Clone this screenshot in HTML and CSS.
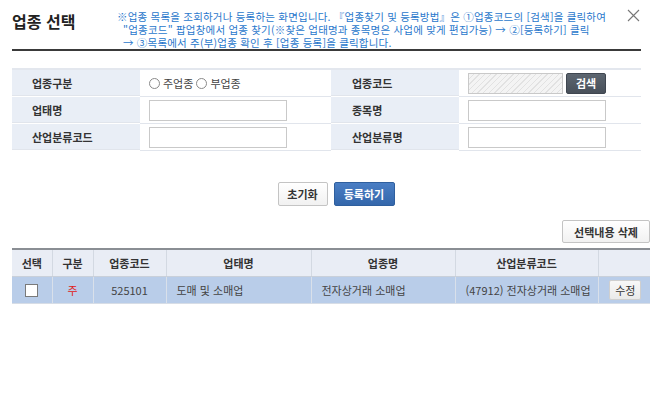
FILE: index.html
```html
<!DOCTYPE html>
<html lang="ko">
    <head>
        <meta charset="UTF-8" />
        <meta name="viewport" content="width=device-width, initial-scale=1.0" />
        <title>업종 선택</title>
        <link rel="stylesheet" href="styles.css">
    </head>
    <body>
        <div id="popup">
            <div class="popHead">
                <h1 class="popTitle">업종 선택</h1>
                <div class="popDesc">
                    <p>※업종 목록을 조회하거나 등록하는 화면입니다. 『업종찾기 및 등록방법』은 ①업종코드의 [검색]을 클릭하여<br>"업종코드" 팝업창에서 업종 찾기(※찾은 업태명과 종목명은 사업에 맞게 편집가능) → ②[등록하기] 클릭<br>→ ③목록에서 주(부)업종 확인 후 [업종 등록]을 클릭합니다.</p>
                </div>
                <button class="btnClose" title="닫기">
                    <svg width="13" height="13" viewBox="0 0 13 13"><path d="M1 1 L12 12 M12 1 L1 12" stroke="#777" stroke-width="1.1" fill="none"/></svg>
                </button>
            </div>

            <div class="searchForm">
                <div class="lbl">업종구분</div>
                <div class="val radios">
                    <label><input type="radio" name="gubun"> 주업종</label>
                    <label><input type="radio" name="gubun"> 부업종</label>
                </div>
                <div class="lbl">업종코드</div>
                <div class="val">
                    <input type="text" class="txt readonly short" readonly>
                    <button class="btnSearch">검색</button>
                </div>

                <div class="lbl">업태명</div>
                <div class="val"><input type="text" class="txt"></div>
                <div class="lbl">종목명</div>
                <div class="val"><input type="text" class="txt"></div>

                <div class="lbl">산업분류코드</div>
                <div class="val"><input type="text" class="txt"></div>
                <div class="lbl">산업분류명</div>
                <div class="val"><input type="text" class="txt"></div>
            </div>

            <div class="btnArea">
                <button class="btn btnGray">초기화</button>
                <button class="btn btnBlue">등록하기</button>
            </div>

            <div class="listTop">
                <button class="btn btnGray">선택내용 삭제</button>
            </div>

            <table class="listTbl">
                <colgroup>
                    <col style="width:40px"><col style="width:41px"><col style="width:73px"><col style="width:145px"><col style="width:144px"><col style="width:143px"><col>
                </colgroup>
                <thead>
                    <tr><th>선택</th><th>구분</th><th>업종코드</th><th>업태명</th><th>업종명</th><th>산업분류코드</th><th></th></tr>
                </thead>
                <tbody>
                    <tr class="on">
                        <td class="c"><input type="checkbox" class="chk"></td>
                        <td class="c main">주</td>
                        <td class="c">525101</td>
                        <td>도매 및 소매업</td>
                        <td>전자상거래 소매업</td>
                        <td>(47912) 전자상거래 소매업</td>
                        <td class="c"><button class="btnEdit">수정</button></td>
                    </tr>
                </tbody>
            </table>
        </div>
    </body>
</html>
```

FILE: styles.css
```css
body {
  margin: 0;
  background: #fff;
  color: #333;
  font-family: "Noto Sans CJK KR", "Noto Sans", sans-serif;
  font-size: 11px;
}

#popup {
  width: 655px;
  height: 394px;
  box-sizing: border-box;
  padding: 0 5px 0 12px;
}

/* header */
.popHead {
  display: flex;
  align-items: flex-start;
  height: 49px;
  margin-right: 9px;
  border-bottom: 2px solid #3a3a3a;
  position: relative;
}

.popTitle {
  margin: 11px 0 0 0;
  font-size: 16px;
  line-height: 20px;
  font-weight: bold;
  color: #222;
  width: 105px;
  flex: none;
}

.popDesc p {
  margin: 10px 0 0 0;
  padding-left: 6px;
  text-indent: -6px;
  color: #2a78cc;
  font-size: 10.5px;
  line-height: 13px;
  letter-spacing: 0.2px;
  white-space: nowrap;
}

.btnClose {
  position: absolute;
  right: 1px;
  top: 9px;
  border: 0;
  background: none;
  padding: 0;
  width: 13px;
  height: 13px;
  cursor: pointer;
}

/* search form */
.searchForm {
  display: grid;
  grid-template-columns: 128px 191px 128px 182px;
  margin-top: 17px;
  margin-right: 9px;
  border-top: 2px solid #e3e7ee;
}

.searchForm .lbl,
.searchForm .val {
  height: 26px;
  border-bottom: 1px solid #e1e5ec;
  display: flex;
  align-items: center;
}

.searchForm .lbl {
  background: #e9eef6;
  padding-left: 20px;
  font-weight: bold;
  font-size: 11px;
  color: #333;
  box-sizing: border-box;
}

.searchForm .val {
  padding-left: 9px;
  gap: 3px;
}

.searchForm .lbl:nth-child(4n+3) {
  padding-left: 21px;
}

.txt {
  box-sizing: border-box;
  width: 138px;
  height: 21px;
  border: 1px solid #c9c9c9;
  background: #fff;
  padding: 0 4px;
  margin: 0;
}

.txt.readonly {
  width: 95px;
  background: repeating-linear-gradient(135deg, #f4f4f4 0 3px, #e2e2e2 3px 4px);
}

.btnSearch {
  width: 40px;
  height: 21px;
  border: 1px solid #3f4650;
  border-radius: 2px;
  background: linear-gradient(#5d6670, #48505a);
  color: #fff;
  font-family: inherit;
  font-weight: bold;
  font-size: 11px;
  padding: 0;
}

.radios {
  gap: 10px;
}

.radios label {
  display: flex;
  align-items: center;
  gap: 3px;
  color: #444;
}

.radios input {
  appearance: none;
  margin: 0;
  width: 11px;
  height: 11px;
  border: 1px solid #8a8a8a;
  border-radius: 50%;
  background: #fff;
}

/* buttons */
.btnArea {
  display: flex;
  justify-content: center;
  gap: 6px;
  margin-top: 31px;
  padding-left: 10px;
}

.btn {
  height: 24px;
  padding: 0 10px;
  border-radius: 2px;
  font-family: inherit;
  font-size: 11px;
  font-weight: bold;
  white-space: nowrap;
  cursor: pointer;
}

.btnGray {
  border: 1px solid #c4c4c4;
  background: linear-gradient(#ffffff, #f1f1f1);
  color: #333;
}

.btnBlue {
  border: 1px solid #2f5f9e;
  background: linear-gradient(#4a7ec4, #3467ab);
  color: #fff;
  width: 61px;
  padding: 0;
}

.btnArea .btnGray {
  width: 50px;
  padding: 0;
}

.listTop {
  display: flex;
  justify-content: flex-end;
  margin-top: 14px;
}

.listTop .btn {
  height: 23px;
  width: 88px;
  padding: 0;
}

/* list */
.listTbl {
  width: 638px;
  margin-top: 5px;
  border-collapse: collapse;
  table-layout: fixed;
  border-top: 2px solid #8a8e94;
}

.listTbl th {
  height: 26px;
  background: #e9edf5;
  font-weight: bold;
  font-size: 11px;
  color: #333;
  border-left: 1px solid #d3d9e2;
  border-bottom: 1px solid #c9d0da;
  padding: 0;
}

.listTbl td {
  height: 26px;
  border-left: 1px solid #d9e0ea;
  border-bottom: 1px solid #d7dde6;
  padding: 0 0 0 10px;
  color: #444;
  white-space: nowrap;
}

.listTbl th:first-child,
.listTbl td:first-child {
  border-left: 0;
}

.listTbl tr.on td {
  background: #b9cde9;
}

.listTbl td.c {
  text-align: center;
  padding: 0;
}

.listTbl td.main {
  color: #e02020;
}

.chk {
  appearance: none;
  margin: 3px 0 0 0;
  width: 13px;
  height: 13px;
  border: 1px solid #7a7a7a;
  background: #fff;
}

.btnEdit {
  width: 32px;
  height: 20px;
  border: 1px solid #cfcfcf;
  border-radius: 2px;
  background: linear-gradient(#f8f8f8, #eaeaea);
  font-family: inherit;
  font-size: 11px;
  color: #333;
  padding: 0;
  margin-left: 2px;
}
```
